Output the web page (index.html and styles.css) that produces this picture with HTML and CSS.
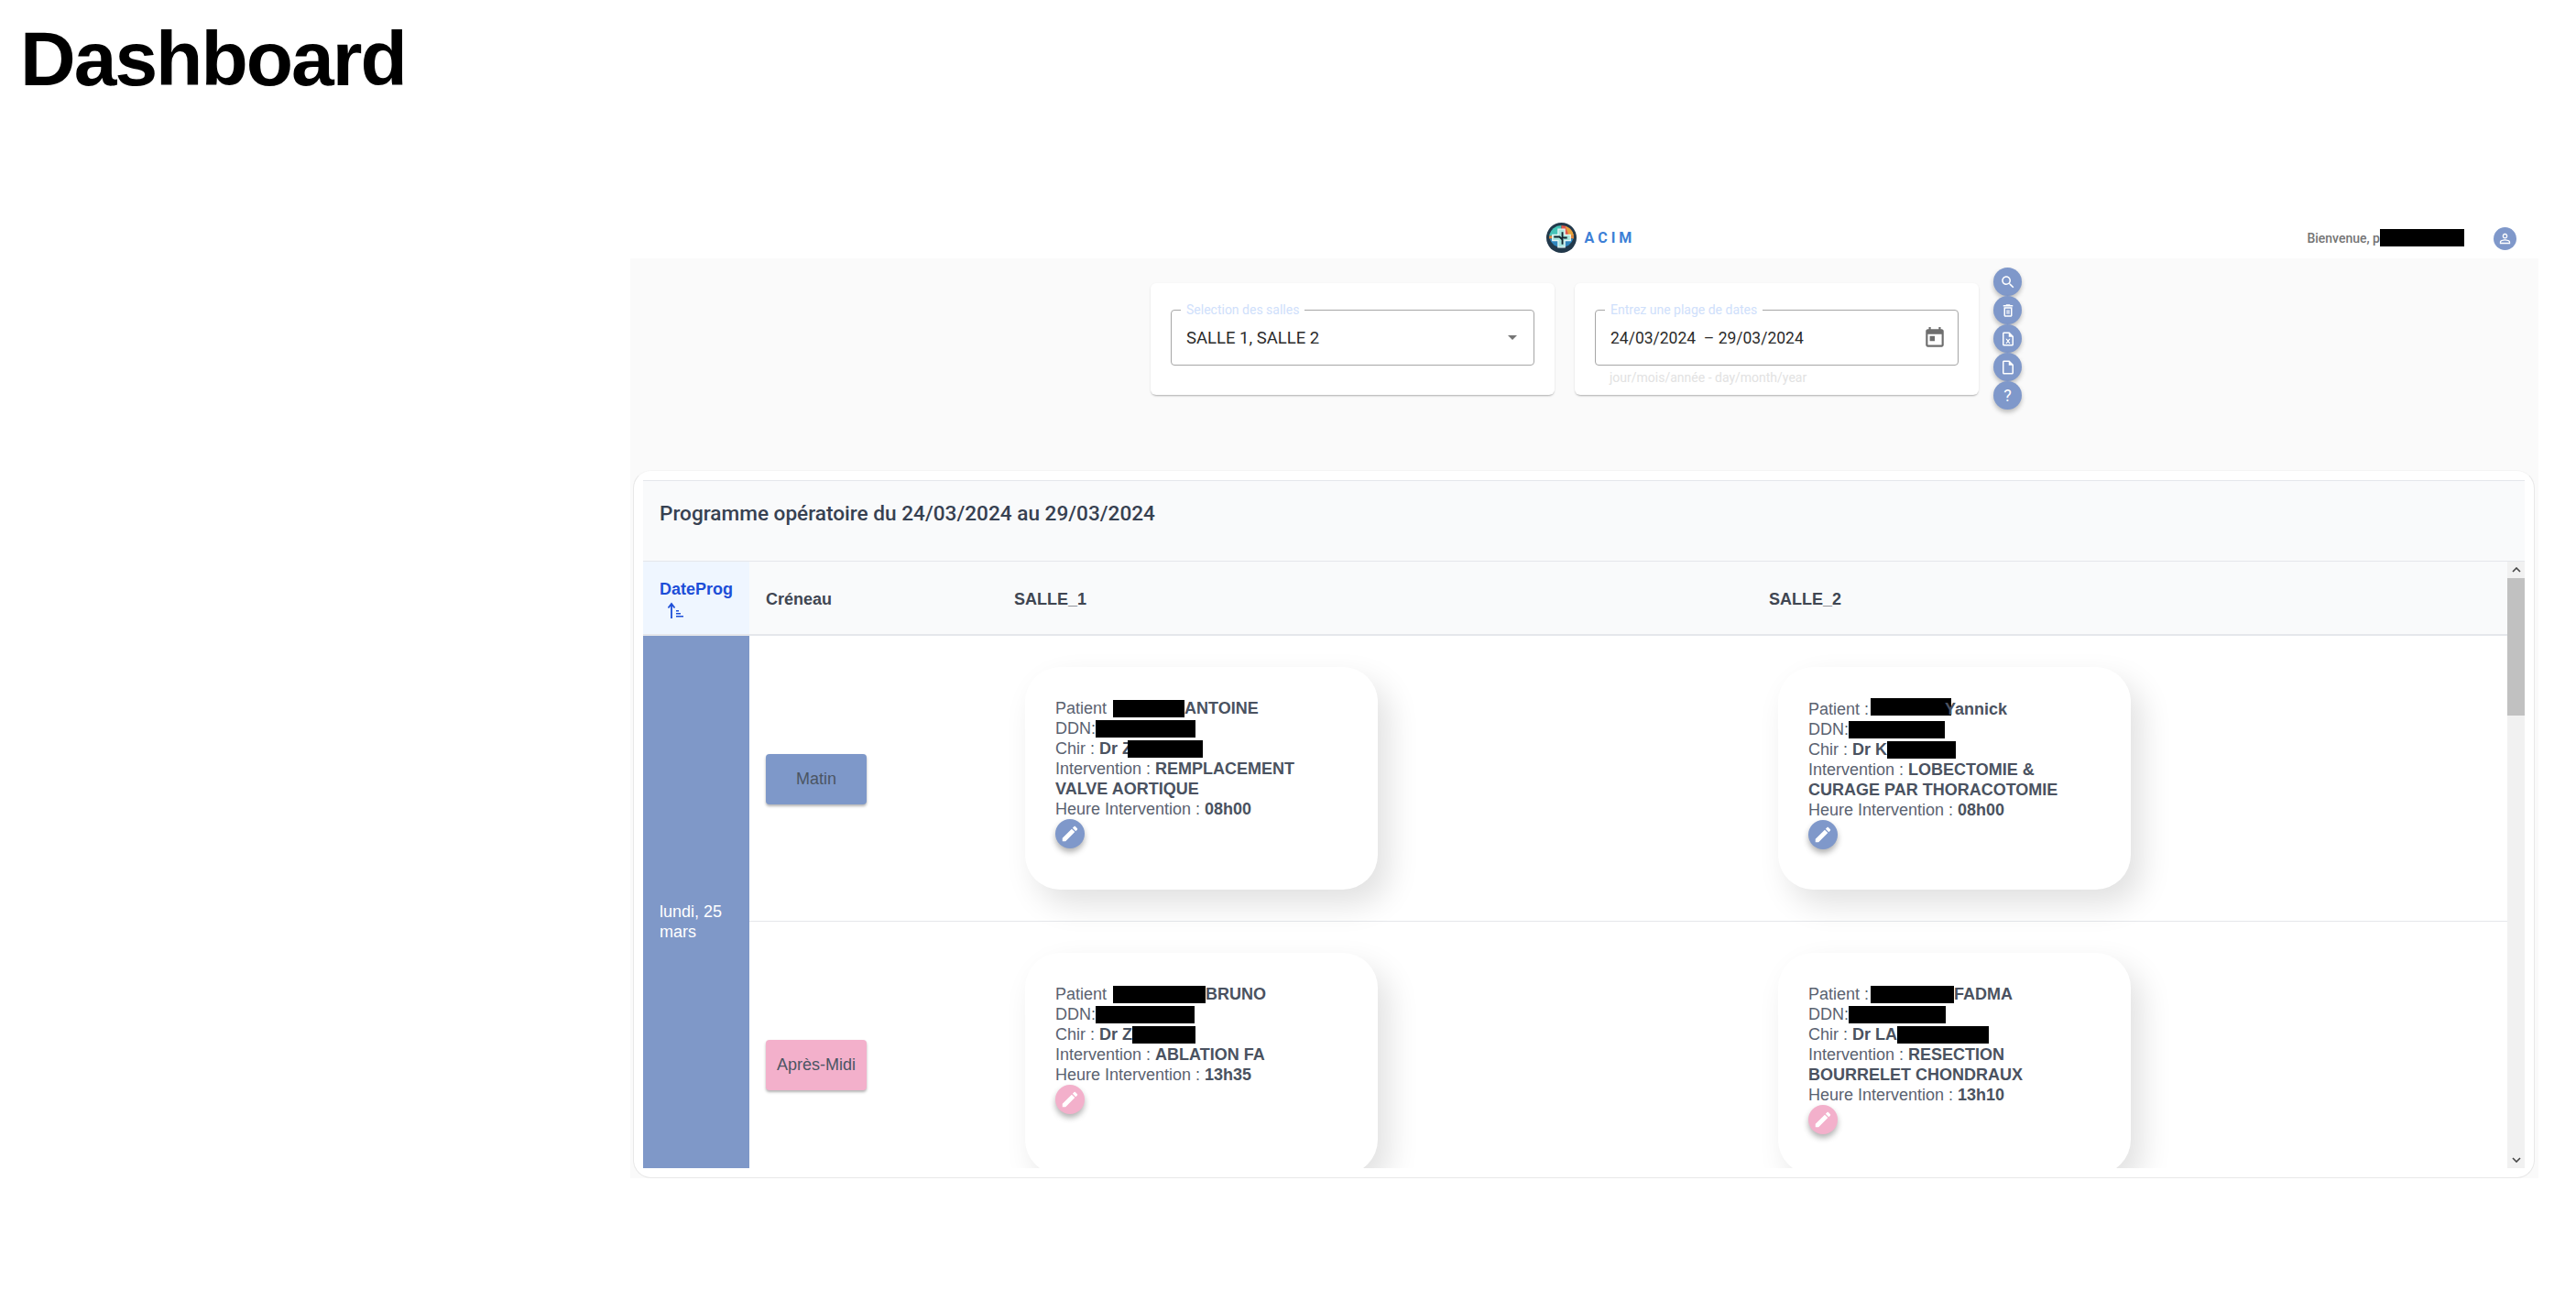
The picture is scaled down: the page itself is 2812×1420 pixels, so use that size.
FILE: index.html
```html
<!DOCTYPE html>
<html lang="fr">
<head>
  <meta charset="UTF-8">
  <meta name="viewport" content="width=device-width, initial-scale=1.0">
  <title>Dashboard</title>
  <link rel="stylesheet" href="styles.css">
</head>
<body>
  <h1 class="page-title">Dashboard</h1>

  <div class="app">
    <header class="topbar">
      <div></div>
      <div class="brand">
        <svg class="brand-logo" viewBox="0 0 32 32">
          <circle cx="16" cy="16" r="16" fill="#22394b"/>
          <path d="M3 14A13 13 0 0 1 16 3v11z" fill="#45c4b8"/>
          <path d="M16 3a13 13 0 0 1 13 11H16z" fill="#e2574c"/>
          <path d="M20 3.700a13 13 0 0 1 9 10.300h-5z" fill="#e8a33c"/>
          <path d="M3 14h26v3H3z" fill="#e58a3e"/>
          <path d="M3.500 17h25a13 13 0 0 1-25 0z" fill="#2f86bd"/>
          <path d="M12.500 7h7v6h6v6h-6v7h-7v-7h-6v-6h6z" fill="#a6e6de" stroke="#e8f6f5" stroke-width="1.200"/>
          <path d="M8 15h6l3 3v5M17 10v6h5" fill="none" stroke="#14242f" stroke-width="1.800"/>
        </svg>
        <span class="brand-name">ACIM</span>
      </div>
      <div class="user">
        <span class="user-hello">Bienvenue, p</span><span class="redact r-92"></span>
        <span class="avatar">
          <svg viewBox="0 0 24 24"><path d="M12 5.900c1.160 0 2.100.940 2.100 2.100s-.940 2.100-2.100 2.100S9.900 9.160 9.900 8s.940-2.100 2.100-2.100m0 9c2.970 0 6.100 1.460 6.100 2.100v1.100H5.900V17c0-.640 3.130-2.100 6.100-2.100M12 4C9.790 4 8 5.790 8 8s1.790 4 4 4 4-1.790 4-4-1.790-4-4-4zm0 9c-2.670 0-8 1.340-8 4v3h16v-3c0-2.660-5.330-4-8-4z"/></svg>
        </span>
      </div>
    </header>

    <div class="workspace">
      <section class="filters">
        <div class="filter-card">
          <div class="field">
            <span class="field-label">Selection des salles</span>
            <span class="field-value">SALLE 1, SALLE 2</span>
            <span class="select-arrow"></span>
          </div>
        </div>
        <div class="filter-card">
          <div class="field">
            <span class="field-label">Entrez une plage de dates</span>
            <span class="field-value field-dates">24/03/2024 &nbsp;– 29/03/2024</span>
            <svg class="field-icon" viewBox="0 0 24 24"><path d="M19 3h-1V1h-2v2H8V1H6v2H5c-1.110 0-1.990.900-1.990 2L3 19c0 1.100.890 2 2 2h14c1.100 0 2-.900 2-2V5c0-1.100-.900-2-2-2zm0 16H5V8h14v11zM7 10h5v5H7z"/></svg>
          </div>
          <div class="field-help">jour/mois/année - day/month/year</div>
        </div>
        <div class="fabs">
          <span class="fab"><svg viewBox="0 0 24 24"><path d="M15.500 14h-.790l-.280-.270C15.410 12.590 16 11.110 16 9.500 16 5.910 13.090 3 9.500 3S3 5.910 3 9.500 5.910 16 9.500 16c1.610 0 3.090-.590 4.230-1.570l.270.280v.790l5 4.990L20.490 19l-4.990-5zm-6 0C7.010 14 5 11.990 5 9.500S7.010 5 9.500 5 14 7.010 14 9.500 11.990 14 9.500 14z"/></svg></span>
          <span class="fab"><svg viewBox="0 0 24 24"><path d="M6 19c0 1.100.900 2 2 2h8c1.100 0 2-.900 2-2V7H6v12zM8 9h8v10H8V9zm7.500-5l-1-1h-5l-1 1H5v2h14V4zM10 11h1.500v6H10zm2.500 0H14v6h-1.500z"/></svg></span>
          <span class="fab"><svg viewBox="0 0 24 24"><path d="M14 2H6c-1.100 0-1.990.900-1.990 2L4 20c0 1.100.890 2 1.990 2H18c1.100 0 2-.900 2-2V8l-6-6zM6 20V4h7v5h5v11H6z"/><path d="M8.500 11.500h1.800l1.700 2.300 1.700-2.300h1.800L13 15l2.500 3.500h-1.800L12 16.200l-1.700 2.300H8.500L11 15z"/></svg></span>
          <span class="fab"><svg viewBox="0 0 24 24"><path d="M14 2H6c-1.100 0-1.990.900-1.990 2L4 20c0 1.100.890 2 1.990 2H18c1.100 0 2-.900 2-2V8l-6-6zM6 20V4h7v5h5v11H6z"/></svg></span>
          <span class="fab fab-help">?</span>
        </div>
      </section>

      <section class="program">
        <div class="program-title">Programme opératoire du 24/03/2024 au 29/03/2024</div>
        <div class="program-body">
          <div class="table-view">
            <div class="table-grid table-head">
              <div class="th th-sort">
                DateProg
                <svg class="sort-icon" viewBox="0 0 20 20"><path d="M5 19V4M1.500 7.500L5 3l3.500 4.500" fill="none" stroke="#1d4ed8" stroke-width="1.800"/><path d="M10 10h3v1.500h-3zm0 3h5v1.500h-5zm0 3h8v1.500h-8z" fill="#1d4ed8"/></svg>
              </div>
              <div class="th">Créneau</div>
              <div class="th">SALLE_1</div>
              <div class="th">SALLE_2</div>
            </div>

            <div class="table-rows">
              <div class="table-grid">
                <div class="date-cell">lundi, 25 mars</div>

                <div class="td td-slot"><span class="slot slot-am">Matin</span></div>
                <div class="td">
                  <article class="op-card">
                    <div class="line">Patient <span class="redact r-78 ml-2"></span><b>ANTOINE</b></div>
                    <div class="line">DDN:<span class="redact r-109"></span></div>
                    <div class="line">Chir : <b>Dr Z</b><span class="redact r-82 ml-n5"></span></div>
                    <div class="line">Intervention : <b>REMPLACEMENT</b></div>
                    <div class="line"><b>VALVE AORTIQUE</b></div>
                    <div class="line">Heure Intervention : <b>08h00</b></div>
                    <span class="edit edit-am"><svg viewBox="0 0 24 24"><path d="M3 17.250V21h3.750L17.810 9.940l-3.750-3.750L3 17.250zM20.710 7.040c.390-.390.390-1.020 0-1.410l-2.340-2.340c-.390-.390-1.020-.390-1.410 0l-1.830 1.830 3.750 3.750 1.830-1.830z"/></svg></span>
                  </article>
                </div>
                <div class="td td-last">
                  <article class="op-card">
                    <div class="line">Patient : <span class="redact r-88 ml-n3 mr-n7 raised"></span><b>Yannick</b></div>
                    <div class="line">DDN:<span class="redact r-105"></span></div>
                    <div class="line">Chir : <b>Dr K</b><span class="redact r-75"></span></div>
                    <div class="line">Intervention : <b>LOBECTOMIE &amp;</b></div>
                    <div class="line"><b>CURAGE PAR THORACOTOMIE</b></div>
                    <div class="line">Heure Intervention : <b>08h00</b></div>
                    <span class="edit edit-am"><svg viewBox="0 0 24 24"><path d="M3 17.250V21h3.750L17.810 9.940l-3.750-3.750L3 17.250zM20.710 7.040c.390-.390.390-1.020 0-1.410l-2.340-2.340c-.390-.390-1.020-.390-1.410 0l-1.830 1.830 3.750 3.750 1.830-1.830z"/></svg></span>
                  </article>
                </div>

                <div class="td td-slot"><span class="slot slot-pm">Après-Midi</span></div>
                <div class="td">
                  <article class="op-card">
                    <div class="line">Patient <span class="redact r-101 ml-2"></span><b>BRUNO</b></div>
                    <div class="line">DDN:<span class="redact r-108"></span></div>
                    <div class="line">Chir : <b>Dr Z</b><span class="redact r-69"></span></div>
                    <div class="line">Intervention : <b>ABLATION FA</b></div>
                    <div class="line">Heure Intervention : <b>13h35</b></div>
                    <span class="edit edit-pm"><svg viewBox="0 0 24 24"><path d="M3 17.250V21h3.750L17.810 9.940l-3.750-3.750L3 17.250zM20.710 7.040c.390-.390.390-1.020 0-1.410l-2.340-2.340c-.390-.390-1.020-.390-1.410 0l-1.830 1.830 3.750 3.750 1.830-1.830z"/></svg></span>
                  </article>
                </div>
                <div class="td td-last">
                  <article class="op-card">
                    <div class="line">Patient : <span class="redact r-91 ml-n3"></span><b>FADMA</b></div>
                    <div class="line">DDN:<span class="redact r-106"></span></div>
                    <div class="line">Chir : <b>Dr LA</b><span class="redact r-100"></span></div>
                    <div class="line">Intervention : <b>RESECTION</b></div>
                    <div class="line"><b>BOURRELET CHONDRAUX</b></div>
                    <div class="line">Heure Intervention : <b>13h10</b></div>
                    <span class="edit edit-pm"><svg viewBox="0 0 24 24"><path d="M3 17.250V21h3.750L17.810 9.940l-3.750-3.750L3 17.250zM20.710 7.040c.390-.390.390-1.020 0-1.410l-2.340-2.340c-.390-.390-1.020-.390-1.410 0l-1.830 1.830 3.750 3.750 1.830-1.830z"/></svg></span>
                  </article>
                </div>
              </div>
            </div>
          </div>

          <div class="scrollbar">
            <svg class="scroll-arrow" viewBox="0 0 10 6"><path d="M1 5l4-4 4 4" fill="none" stroke="#444" stroke-width="1.600"/></svg>
            <div class="scroll-track"><div class="scroll-thumb"></div></div>
            <svg class="scroll-arrow" viewBox="0 0 10 6"><path d="M1 1l4 4 4-4" fill="none" stroke="#444" stroke-width="1.600"/></svg>
          </div>
        </div>
      </section>
    </div>
  </div>
</body>
</html>
```

FILE: styles.css
```css
body {
  margin: 0;
  height: 1420px;
  overflow: hidden;
  background: #fff;
  font-family: "Liberation Sans", Arial, sans-serif;
}
.page-title {
  margin: 0;
  height: 232px;
  padding: 20px 0 0 22px;
  box-sizing: border-box;
  font-size: 84px;
  line-height: 88px;
  font-weight: 700;
  letter-spacing: -2px;
  color: #000;
}
.app {
  margin-left: 688px;
  width: 2083px;
}

/* top bar */
.topbar {
  display: grid;
  grid-template-columns: 1fr auto 1fr;
  align-items: center;
  height: 50px;
  padding-right: 24px;
  box-sizing: border-box;
  font-family: Roboto, sans-serif;
}
.brand {
  display: flex;
  align-items: center;
  gap: 9px;
  margin: 4px 0 0 38px;
}
.brand-logo {
  width: 33px;
  height: 33px;
}
.brand-name {
  font-size: 16px;
  font-weight: 700;
  letter-spacing: 4px;
  color: #3c7fd6;
}
.user {
  display: flex;
  align-items: center;
  justify-content: flex-end;
  font-size: 14px;
  font-weight: 500;
  color: #757575;
  margin-top: 4px;
}
.user-hello {
  margin-top: 2px;
}
.avatar {
  display: flex;
  align-items: center;
  justify-content: center;
  width: 25px;
  height: 25px;
  margin-left: 32px;
  margin-top: 3px;
  border-radius: 50%;
  background: #7f98ca;
}
.avatar svg {
  width: 17px;
  height: 17px;
  fill: #fff;
}
.redact {
  display: inline-block;
  height: 19px;
  background: #000;
  vertical-align: -4px;
}
.r-69 { width: 69px; }
.r-75 { width: 75px; }
.r-78 { width: 78px; }
.r-82 { width: 82px; }
.r-88 { width: 88px; }
.r-91 { width: 91px; }
.r-92 { width: 92px; }
.r-100 { width: 100px; }
.r-101 { width: 101px; }
.r-105 { width: 105px; }
.r-106 { width: 106px; }
.r-108 { width: 108px; }
.r-109 { width: 109px; }
.ml-2 { margin-left: 2px; }
.ml-n3 { margin-left: -3px; }
.ml-n5 { margin-left: -5px; }
.mr-n7 { margin-right: -7px; }
.raised { vertical-align: -1px; }

.workspace {
  background: #fafafa;
  height: 1004px;
}

/* filters */
.filters {
  display: flex;
  align-items: flex-start;
  gap: 22px;
  height: 231px;
  box-sizing: border-box;
  padding: 27px 0 0 568px;
  font-family: Roboto, sans-serif;
}
.filter-card {
  width: 441px;
  height: 122px;
  box-sizing: border-box;
  padding: 29px 22px 0;
  background: #fff;
  border-radius: 6px;
  box-shadow: 0 2px 2px -1px rgba(0, 0, 0, .25), 0 1px 3px rgba(0, 0, 0, .08);
}
.field {
  position: relative;
  display: flex;
  align-items: center;
  justify-content: space-between;
  height: 61px;
  box-sizing: border-box;
  padding: 0 15px 0 16px;
  border: 1px solid #a6a6a6;
  border-radius: 4px;
}
.field-label {
  position: absolute;
  top: -9px;
  left: 10px;
  padding: 0 6px;
  background: #fff;
  font-size: 14px;
  line-height: 16px;
  color: #cfe0fb;
}
.field-value {
  font-size: 18.500px;
  color: #2b2b2b;
}
.field-dates {
  font-size: 17.500px;
}
.select-arrow {
  width: 0;
  height: 0;
  margin-right: 3px;
  border-left: 5px solid transparent;
  border-right: 5px solid transparent;
  border-top: 5px solid #757575;
}
.field-icon {
  width: 26px;
  height: 26px;
  fill: #6e6e6e;
  margin-right: -3px;
}
.field-help {
  margin: 5px 0 0 16px;
  font-size: 14px;
  line-height: 16px;
  color: #e2e2e2;
}
.fabs {
  display: flex;
  flex-direction: column;
  margin: -17px 0 0 -4px;
  transform: translateX(-2px);
}
.fab {
  display: flex;
  align-items: center;
  justify-content: center;
  width: 31px;
  height: 31px;
  border-radius: 50%;
  background: #7f98ca;
  box-shadow: 0 3px 5px rgba(0, 0, 0, .25);
  color: #fff;
  font-size: 18px;
}
.fab svg {
  width: 18px;
  height: 18px;
  fill: #fff;
}

/* programme */
.program {
  width: 2076px;
  height: 773px;
  margin-left: 3px;
  box-sizing: border-box;
  padding: 10px;
  background: #fff;
  border: 1px solid #e8e8e8;
  border-top-color: #f4f4f4;
  border-radius: 20px;
}
.program-title {
  height: 89px;
  box-sizing: border-box;
  padding: 22px 0 0 18px;
  background: #f9fafb;
  border-top: 1px solid #e5e7eb;
  border-bottom: 1px solid #e5e7eb;
  font-family: Roboto, sans-serif;
  font-size: 22.600px;
  line-height: 28px;
  font-weight: 500;
  color: #374151;
}
.program-body {
  display: flex;
  height: 662px;
}
.table-view {
  width: 2035px;
}
.table-grid {
  display: grid;
  grid-template-columns: 116px 271px 824px 824px;
}
.table-head {
  height: 81px;
  background: #f9fafb;
  border-bottom: 2px solid #e5e7eb;
  box-sizing: border-box;
}
.th {
  display: flex;
  align-items: center;
  padding: 3px 0 0 18px;
  font-size: 18px;
  font-weight: 700;
  color: #404652;
}
.th-sort {
  display: block;
  padding-top: 20px;
  background: #eff6ff;
  color: #1d4ed8;
}
.sort-icon {
  display: block;
  width: 20px;
  height: 20px;
  margin: 2px 0 0 8px;
}
.table-rows {
  height: 581px;
  overflow: hidden;
}
.date-cell {
  grid-row: span 2;
  display: flex;
  align-items: center;
  padding: 0 18px;
  background: #7f98c8;
  font-size: 18px;
  line-height: 22px;
  color: #fff;
}
.td {
  display: flex;
  align-items: stretch;
  padding: 34px 0 34px 30px;
  border-bottom: 1px solid #e5e7eb;
}
.td-last {
  padding-left: 28px;
}
.td-slot {
  align-items: center;
  padding: 2px 0 0 18px;
}
.slot {
  display: flex;
  align-items: center;
  justify-content: center;
  width: 110px;
  height: 55px;
  border-radius: 4px;
  font-size: 18px;
  color: #4b5563;
  box-shadow: 0 2px 3px rgba(0, 0, 0, .3);
}
.slot-am { background: #7e98c9; }
.slot-pm { background: #f3b0cb; }
.op-card {
  width: 385px;
  box-sizing: border-box;
  padding: 34px 30px 44px 33px;
  background: #fff;
  border-radius: 38px;
  box-shadow: 12px 16px 34px rgba(0, 0, 0, .12);
  font-size: 18px;
  line-height: 22px;
  color: #5a6270;
}
.op-card b {
  color: #4a5260;
}
.edit {
  display: flex;
  align-items: center;
  justify-content: center;
  width: 32px;
  height: 32px;
  border-radius: 50%;
  box-shadow: 0 4px 6px rgba(0, 0, 0, .3);
}
.edit svg {
  width: 22px;
  height: 22px;
  fill: #fff;
}
.edit-am { background: #7f98ca; }
.edit-pm { background: #f3b0cb; }

/* scrollbar */
.scrollbar {
  display: flex;
  flex-direction: column;
  align-items: center;
  width: 19px;
  height: 662px;
  background: #f1f1f1;
}
.scroll-arrow {
  width: 10px;
  height: 6px;
  margin: 6px 0;
}
.scroll-track {
  flex: 1;
  width: 100%;
}
.scroll-thumb {
  height: 150px;
  background: #c1c1c1;
}
```
